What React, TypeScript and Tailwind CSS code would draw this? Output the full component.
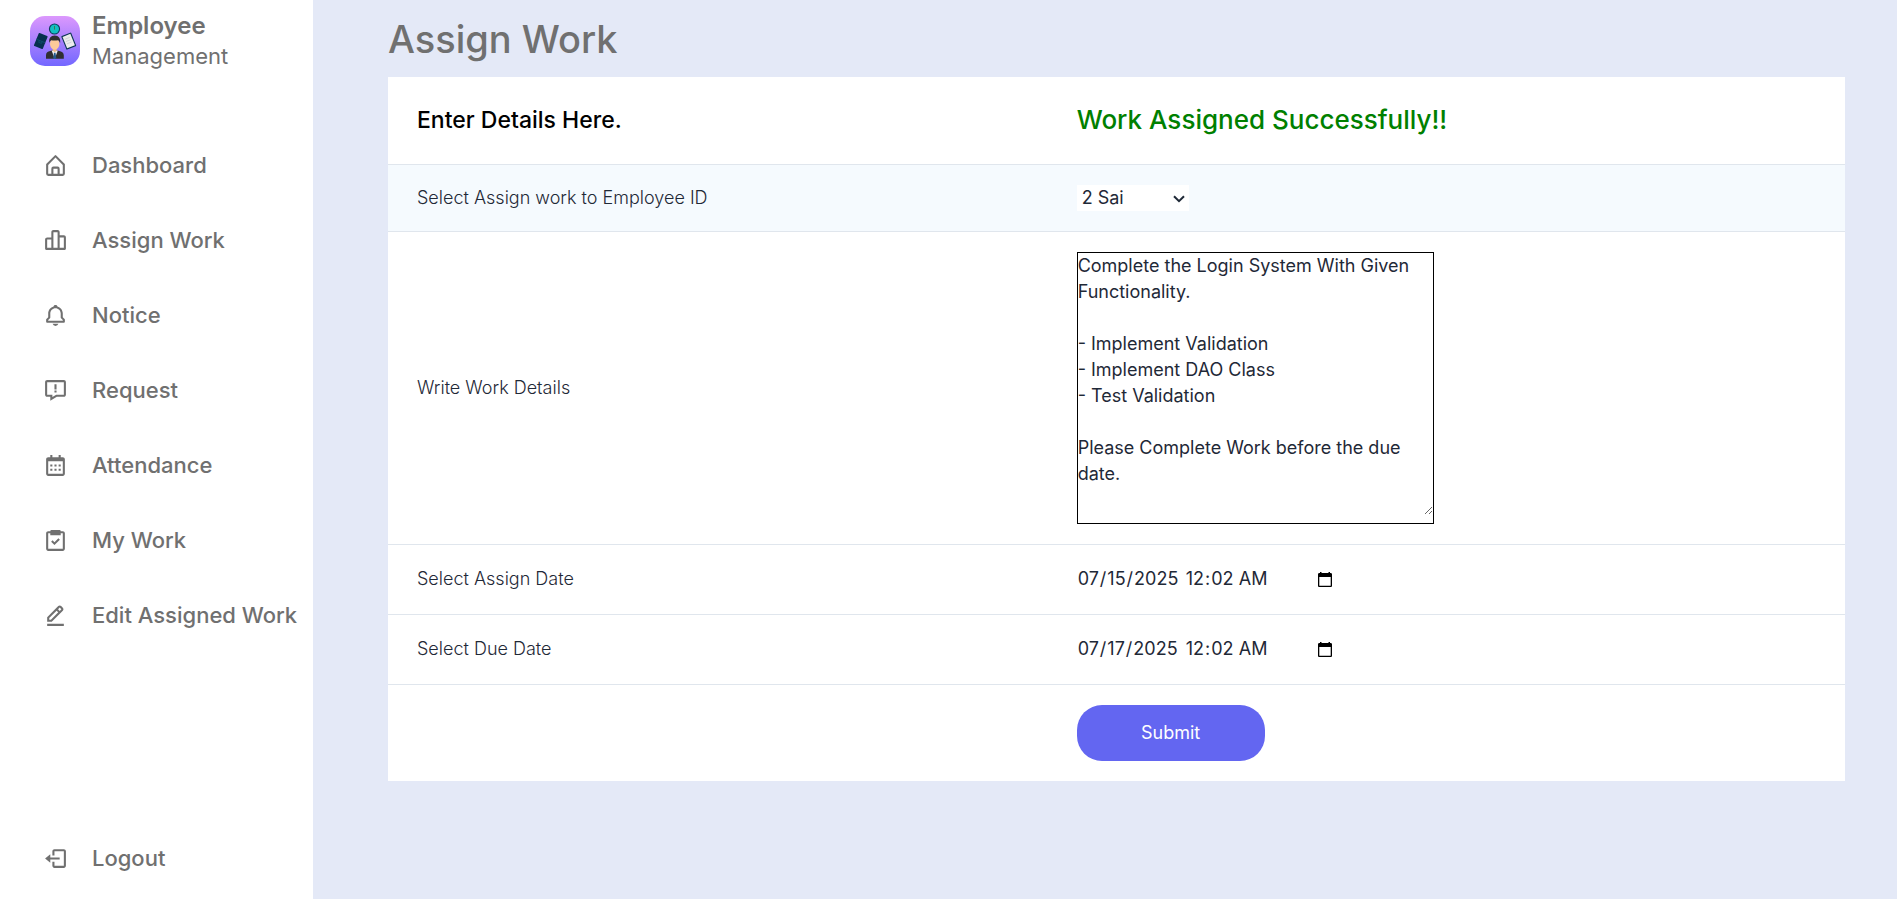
import { useRef, useState } from "react";
import type { ReactNode } from "react";
import {
  BiBarChartAlt2,
  BiBell,
  BiCalendar,
  BiEditAlt,
  BiHomeAlt,
  BiLogOut,
  BiMessageError,
  BiTask,
} from "react-icons/bi";
import type { IconType } from "react-icons";

const navItems: { label: string; icon: IconType }[] = [
  { label: "Dashboard", icon: BiHomeAlt },
  { label: "Assign Work", icon: BiBarChartAlt2 },
  { label: "Notice", icon: BiBell },
  { label: "Request", icon: BiMessageError },
  { label: "Attendance", icon: BiCalendar },
  { label: "My Work", icon: BiTask },
  { label: "Edit Assigned Work", icon: BiEditAlt },
];

const workDetails = `Complete the Login System With Given Functionality.

- Implement Validation
- Implement DAO Class
- Test Validation

Please Complete Work before the due date.`;

function Logo() {
  return (
    <svg viewBox="0 0 50 50" className="size-[50px] shrink-0" aria-hidden="true">
      <defs>
        <linearGradient id="logo-bg" x1="0" y1="0" x2="0" y2="1">
          <stop offset="0" stopColor="#dc98fd" />
          <stop offset="1" stopColor="#7367ff" />
        </linearGradient>
      </defs>
      <rect width="50" height="50" rx="15" fill="url(#logo-bg)" />
      <circle cx="24.5" cy="13" r="5.6" fill="#0b3b5c" />
      <circle cx="24.5" cy="13" r="4.5" fill="#12bfc0" />
      <path d="M24.5 10v3.6" stroke="#3f6f4a" strokeWidth="0.9" />
      <g transform="rotate(22 10.8 25)">
        <rect x="6" y="18" width="9.6" height="14" rx="0.8" fill="#06304f" />
        <path d="M6 25h9.6M9.3 25v2h3v-2" stroke="#0c4f6b" strokeWidth="0.8" fill="none" />
      </g>
      <g transform="rotate(-22 38.7 25)">
        <rect x="33.4" y="17.8" width="10.6" height="14.6" rx="0.8" fill="#0b3454" />
        <rect x="34.5" y="19" width="8.4" height="12.2" fill="#ececec" />
        <path d="M36 22h5M36 24.5h5M36 27h5" stroke="#c8cbd0" strokeWidth="0.7" />
      </g>
      <path d="M16 42.8v-3.6c0-2.4 1.8-3.8 4.2-4.2l2.3-.8h4.4l2.3.8c2.4.4 4.6 1.8 4.6 4.2v3.6z" fill="#2f2f31" />
      <path d="M21.6 34.6l3.1 8.2 3.1-8.2z" fill="#f1f1f1" />
      <path d="M24 36.8h1.5l.9 6h-3.3z" fill="#245a8c" />
      <path d="M22.8 31h3.8v3.6l-1.9 1.8-1.9-1.8z" fill="#f0b98c" />
      <ellipse cx="24.7" cy="28" rx="4.7" ry="5.6" fill="#fcc99a" />
      <path d="M19.2 27c-.6-4.6 1.6-7.4 5.5-7.4s6.1 2.8 5.4 7.4c-.7-1.7-1.4-2.6-2-2.8-2.2.5-4.8.5-6.9 0-.8.5-1.500 1.300-2 2.800z" fill="#2f2f31" />
    </svg>
  );
}

function NavLink({ label, icon: Icon }: { label: string; icon: IconType }) {
  return (
    <a href="#" className="flex h-[50px] items-center text-[#707070]">
      <span className="flex w-[74px] shrink-0 justify-center">
        <Icon size={25} aria-hidden="true" />
      </span>
      <span className="text-[22px] font-medium whitespace-nowrap">{label}</span>
    </a>
  );
}

function Row({ label, children, tinted = false }: { label: ReactNode; children: ReactNode; tinted?: boolean }) {
  return (
    <tr className={tinted ? "border-t border-[#e0e6ed] bg-[#f5fafe]" : "border-t border-[#e0e6ed]"}>
      <td className="px-[29px] py-5 font-light">{label}</td>
      <td className="px-[33px] py-5">{children}</td>
    </tr>
  );
}

function DateTimeField({ id, name, day, hour }: { id: string; name: string; day: string; hour: string }) {
  const [date, setDate] = useState(day);
  const [time, setTime] = useState(hour);
  const dateRef = useRef<HTMLInputElement>(null);

  return (
    <div className="flex h-[29px] w-64 items-center">
      <input
        ref={dateRef}
        id={id}
        type="date"
        value={date}
        onChange={(event) => setDate(event.target.value)}
        className="block w-[108px] [&::-webkit-calendar-picker-indicator]:hidden"
      />
      <input
        type="time"
        aria-label={`${name} time`}
        value={time}
        onChange={(event) => setTime(event.target.value)}
        className="block w-24 [&::-webkit-calendar-picker-indicator]:hidden"
      />
      <button
        type="button"
        aria-label={`Open ${name} calendar`}
        onClick={() => dateRef.current?.showPicker()}
        className="ml-auto pr-px"
      >
        <svg viewBox="0 0 14 15" className="h-[15px] w-3.5" aria-hidden="true">
          <path
            fillRule="evenodd"
            d="M2 0h1.500v1h7V0H12v1h.7c.7 0 1.300.6 1.300 1.300v11.400c0 .7-.6 1.300-1.300 1.300H1.300C.6 15 0 14.400 0 13.700V2.300C0 1.600.6 1 1.300 1H2zM1.300 5v8.700h11.400V5z"
          />
        </svg>
      </button>
    </div>
  );
}

export default function App() {
  const [employee, setEmployee] = useState("2");
  const [details, setDetails] = useState(workDetails);

  return (
    <div className="flex min-h-screen bg-[#e4e9f7] font-['Inter',sans-serif]">
      <aside className="flex w-[313px] shrink-0 flex-col bg-white pr-4 pb-4 pl-[18px]">
        <header className="flex items-center pt-[11px] pl-3 text-[#707070]">
          <Logo />
          <div className="flex flex-col pl-3">
            <span className="text-2xl leading-[30px] font-semibold">Employee</span>
            <span className="text-[22px] leading-[30px] font-normal">Management</span>
          </div>
        </header>
        <nav className="flex grow flex-col justify-between pt-[69px]">
          <ul className="flex flex-col gap-[25px]">
            {navItems.map((item) => (
              <li key={item.label}>
                <NavLink {...item} />
              </li>
            ))}
          </ul>
          <NavLink label="Logout" icon={BiLogOut} />
        </nav>
      </aside>

      <main className="min-w-0 grow pr-[52px] pl-[75px]">
        <h1 className="pt-[9px] pb-2 text-[38px] leading-[60px] font-medium text-[#707070]">Assign Work</h1>
        <form onSubmit={(event) => event.preventDefault()}>
          <table className="w-full table-fixed border-collapse bg-white text-left text-lg leading-[26px] text-[#1f2937]">
            <colgroup>
              <col className="w-[45%]" />
              <col className="w-[55%]" />
            </colgroup>
            <thead>
              <tr className="h-[87px]">
                <th className="px-[29px] text-[23px] font-medium text-black">Enter Details Here.</th>
                <th className="px-[33px] text-[26px] font-medium text-[#008000]">Work Assigned Successfully!!</th>
              </tr>
            </thead>
            <tbody>
              <Row tinted label={<label htmlFor="employee">Select Assign work to Employee ID</label>}>
                <div className="relative w-28">
                  <select
                    id="employee"
                    value={employee}
                    onChange={(event) => setEmployee(event.target.value)}
                    className="block h-[26px] w-full appearance-none bg-white pl-[5px]"
                  >
                    <option value="2">2 Sai</option>
                  </select>
                  <svg
                    viewBox="0 0 12 8"
                    className="pointer-events-none absolute top-2.5 right-1 h-2 w-3"
                    aria-hidden="true"
                  >
                    <path d="M1 1.200l5 5 5-5" fill="none" stroke="#1f2937" strokeWidth="2" />
                  </svg>
                </div>
              </Row>
              <Row label={<label htmlFor="details">Write Work Details</label>}>
                <div className="w-[357px] border border-black pb-2">
                  <textarea
                    id="details"
                    value={details}
                    onChange={(event) => setDetails(event.target.value)}
                    className="block h-[262px] w-full outline-none"
                  />
                </div>
              </Row>
              <Row label={<label htmlFor="assign-date">Select Assign Date</label>}>
                <DateTimeField id="assign-date" name="Assign" day="2025-07-15" hour="00:02" />
              </Row>
              <Row label={<label htmlFor="due-date">Select Due Date</label>}>
                <DateTimeField id="due-date" name="Due" day="2025-07-17" hour="00:02" />
              </Row>
              <Row label="">
                <button type="submit" className="block h-14 w-[188px] rounded-[25px] bg-[#6366f1] text-white">
                  Submit
                </button>
              </Row>
            </tbody>
          </table>
        </form>
      </main>
    </div>
  );
}
